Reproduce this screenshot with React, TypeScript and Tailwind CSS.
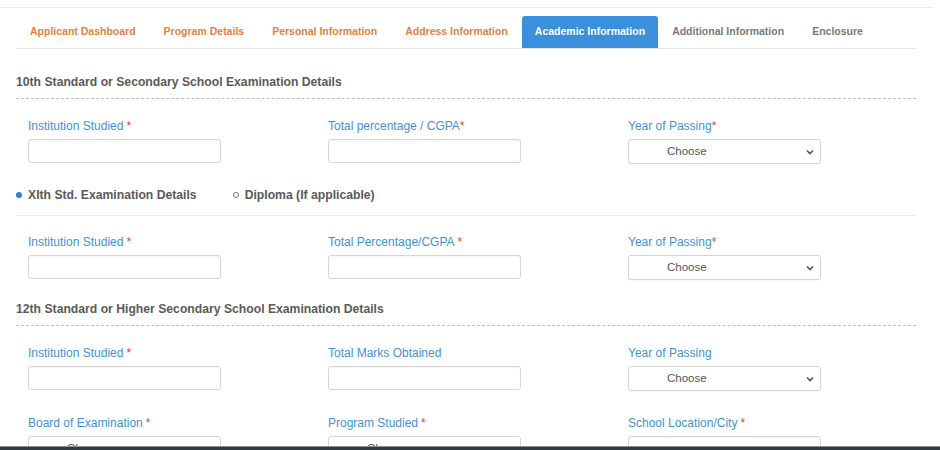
import React from "react";

const tabs = [
  { t: "Applicant Dashboard", c: "text-[#e8803f]" },
  { t: "Program Details", c: "text-[#e8803f]" },
  { t: "Personal Information", c: "text-[#e8803f]" },
  { t: "Address Information", c: "text-[#e8803f]" },
  { t: "Academic Information", c: "active" },
  { t: "Additional Information", c: "text-[#7a7a7a]" },
  { t: "Enclosure", c: "text-[#7a7a7a]" },
];

function Label({ text, req, tight }: { text: string; req?: boolean; tight?: boolean }) {
  return (
    <div className="h-[14px] leading-[14px] text-[12px] text-[#3f93d3] whitespace-nowrap">
      {text}
      {req ? <span className={`text-[#e23b3b] ${tight ? "" : "ml-[3px]"}`}>*</span> : null}
    </div>
  );
}

function Input() {
  return <div className="w-[193px] h-[24px] rounded-[3px] border border-[#d6d6d6] bg-white shadow-[inset_0_1px_1px_rgba(0,0,0,0.04)]" />;
}

function Select() {
  return (
    <div className="w-[193px] h-[25px] rounded-[3px] border border-[#d6d6d6] bg-white flex items-center pl-[38px] pr-[6px] shadow-[0_1px_1px_rgba(0,0,0,0.04)]">
      <span className="text-[11.5px] text-[#555] flex-1">Choose</span>
      <svg width="8" height="6" viewBox="0 0 8 6">
        <path d="M1 1.5 L4 4.5 L7 1.5" stroke="#555" strokeWidth="1.6" fill="none" />
      </svg>
    </div>
  );
}

function Field({ label, req, tight, kind }: { label: string; req?: boolean; tight?: boolean; kind: "i" | "s" }) {
  return (
    <div className="flex flex-col">
      <Label text={label} req={req} tight={tight} />
      <div className="mt-[6px]">{kind === "i" ? <Input /> : <Select />}</div>
    </div>
  );
}

function Row({ children, className }: { children: React.ReactNode; className?: string }) {
  return <div className={`grid grid-cols-[300px_300px_300px] pl-[12px] ${className ?? ""}`}>{children}</div>;
}

function Heading({ text, className }: { text: string; className?: string }) {
  return (
    <div className={`leading-[14px] text-[12.2px] font-bold text-[#5a5a5a] pb-[9px] border-b border-dashed border-[#bdbdbd] ${className ?? ""}`}>
      {text}
    </div>
  );
}

export default function App() {
  return (
    <div className="w-[940px] h-[450px] bg-white relative overflow-hidden font-['Liberation_Sans',Arial,sans-serif]">
      <div className="h-[8px] border-b border-[#ececec] mr-[6px]" />
      <div className="px-[16px] w-[932px]">
        <div className="mt-[8px] flex h-[33px] border-b border-[#e6e6e6]">
          {tabs.map((tb) =>
            tb.c === "active" ? (
              <div
                key={tb.t}
                className="h-[32px] px-[13px] flex items-center bg-[#3a90dc] rounded-t-[3px] text-white text-[10.5px] font-bold whitespace-nowrap"
              >
                {tb.t}
              </div>
            ) : (
              <div
                key={tb.t}
                className={`h-[32px] px-[14px] flex items-center text-[10.5px] font-bold whitespace-nowrap ${tb.c}`}
              >
                {tb.t}
              </div>
            )
          )}
        </div>

        <Heading text="10th Standard or Secondary School Examination Details" className="mt-[26px]" />

        <Row className="mt-[20px]">
          <Field label="Institution Studied" req kind="i" />
          <Field label="Total percentage / CGPA" req tight kind="i" />
          <Field label="Year of Passing" req tight kind="s" />
        </Row>

        <div className="mt-[24px] pb-[14px] border-b border-[#ededed] flex items-center h-[28px] box-border leading-[14px] text-[12.2px] font-bold text-[#5a5a5a]">
          <span className="w-[6px] h-[6px] rounded-full bg-[#2f7fe0] mr-[6px]" />
          <span>XIth Std. Examination Details</span>
          <span className="w-[6px] h-[6px] rounded-full border border-[#777] ml-[36px] mr-[6px]" />
          <span>Diploma (If applicable)</span>
        </div>

        <Row className="mt-[19px]">
          <Field label="Institution Studied" req kind="i" />
          <Field label="Total Percentage/CGPA" req kind="i" />
          <Field label="Year of Passing" req tight kind="s" />
        </Row>

        <Heading text="12th Standard or Higher Secondary School Examination Details" className="mt-[22px]" />

        <Row className="mt-[20px]">
          <Field label="Institution Studied" req kind="i" />
          <Field label="Total Marks Obtained" kind="i" />
          <Field label="Year of Passing" kind="s" />
        </Row>

        <Row className="mt-[25px]">
          <Field label="Board of Examination" req kind="s" />
          <Field label="Program Studied" req kind="s" />
          <Field label="School Location/City" req kind="i" />
        </Row>
      </div>
      <div className="absolute left-0 right-0 bottom-0 h-[4px] bg-[#333a42] border-t border-[#8d949b]" />
    </div>
  );
}
